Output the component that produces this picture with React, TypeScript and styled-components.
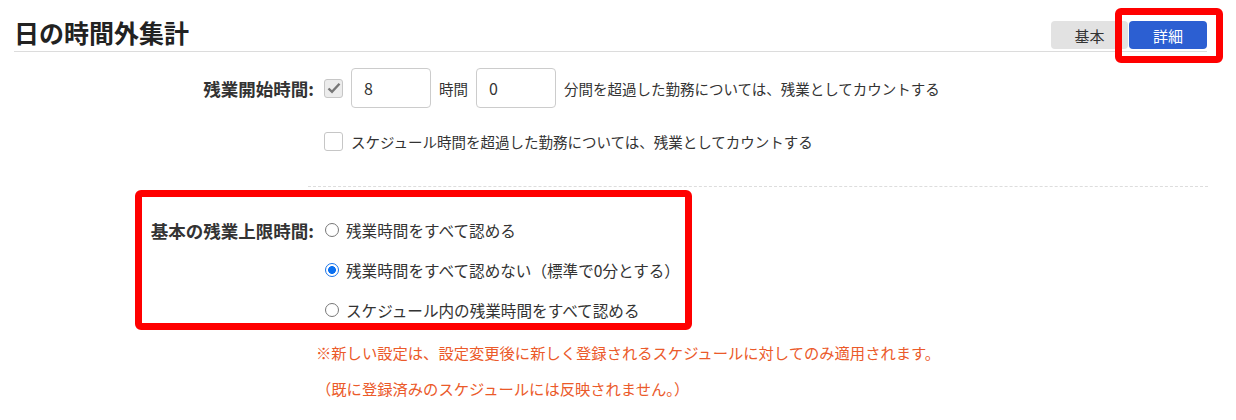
import React from 'react'
import styled, { createGlobalStyle } from 'styled-components'

const GlobalStyle = createGlobalStyle`
  body {
    margin: 0;
    background: #fff;
    color: #333;
    font-family: 'Noto Sans CJK JP', 'Noto Sans', sans-serif;
  }
`

const Page = styled.div`
  width: 1236px;
  height: 420px;
  overflow: hidden;
`

const Header = styled.div`
  display: flex;
  align-items: flex-end;
  margin: 14px 29px 0 14px;
  border-bottom: 1px solid #dcdcdc;
`

const Title = styled.h1`
  flex: 1;
  margin: 0;
  font-size: 25px;
  line-height: 37px;
  font-weight: 700;
  color: #222;
`

const Toggle = styled.div`
  display: flex;
  gap: 1px;
  margin-bottom: 2px;
`

const ToggleButton = styled.button<{ $active?: boolean }>`
  position: relative;
  width: ${p => (p.$active ? 78 : 77)}px;
  height: 28px;
  border: none;
  border-radius: 4px;
  font-family: inherit;
  font-size: 15px;
  background: ${p => (p.$active ? '#2c5fd2' : '#e2e2e2')};
  color: ${p => (p.$active ? '#fff' : '#333')};

  ${p =>
    p.$active &&
    `
    &::after {
      content: '';
      position: absolute;
      left: -14px;
      top: -13px;
      width: 108px;
      height: 55px;
      box-sizing: border-box;
      border: 7px solid #f00;
      border-radius: 6px;
    }
  `}
`

const Form = styled.div`
  padding-left: 14px;
  font-size: 14.5px;
`

const Row = styled.div<{ $top?: number }>`
  display: grid;
  grid-template-columns: 300px 1fr;
  column-gap: 10px;
  align-items: center;
  min-height: 40px;
  margin-top: ${p => p.$top ?? 0}px;
`

const Label = styled.div`
  text-align: right;
  font-weight: 700;
  font-size: 17.5px;
  color: #333;
`

const Field = styled.div`
  display: flex;
  align-items: center;
  gap: 8px;
  white-space: nowrap;
`

const Check = styled.span<{ $checked?: boolean }>`
  display: inline-flex;
  align-items: center;
  justify-content: center;
  width: 19px;
  height: 19px;
  box-sizing: border-box;
  border: 1px solid #c6c6c6;
  border-radius: 3px;
  background: ${p => (p.$checked ? '#ececec' : '#fff')};
`

const NumInput = styled.input`
  width: 80px;
  height: 40px;
  box-sizing: border-box;
  border: 1px solid #ccc;
  border-radius: 4px;
  padding: 0 12px;
  font-family: inherit;
  font-size: 16px;
  color: #333;
`

const Dashed = styled.div`
  margin: 25px 28px 0 308px;
  border-top: 1px dashed #ddd;
`

const RadioGroup = styled.div`
  position: relative;
  margin-top: 23px;

  &::after {
    content: '';
    position: absolute;
    left: 121px;
    top: -20px;
    width: 557px;
    height: 140px;
    box-sizing: border-box;
    border: 7px solid #f00;
    border-radius: 6px;
    pointer-events: none;
  }
`

const RadioOption = styled.label`
  display: flex;
  align-items: center;
  gap: 7px;
  font-size: 15.6px;
  white-space: nowrap;
`

const Radio = styled.span<{ $checked?: boolean }>`
  width: 14px;
  height: 14px;
  box-sizing: border-box;
  border-radius: 50%;
  border: ${p => (p.$checked ? '1px solid #1a73e8' : '1px solid #777')};
  background: ${p =>
    p.$checked ? 'radial-gradient(circle, #0b70f0 0 3.6px, #fff 4.2px)' : '#fff'};
  margin-left: 1px;
`

const Note = styled.div<{ $top?: number }>`
  color: #eb5a2a;
  font-size: 15.3px;
  line-height: 36px;
  margin: ${p => p.$top ?? 0}px 0 0 302px;
`

const CheckMark = () => (
  <svg width="14" height="12" viewBox="0 0 14 12">
    <path d="M1.5 6.5 L5 9.8 L12.5 1.8" fill="none" stroke="#777" strokeWidth="2.4" />
  </svg>
)

export default function App() {
  return (
    <Page>
      <GlobalStyle />
      <Header>
        <Title>日の時間外集計</Title>
        <Toggle>
          <ToggleButton>基本</ToggleButton>
          <ToggleButton $active>詳細</ToggleButton>
        </Toggle>
      </Header>

      <Form>
        <Row $top={16}>
          <Label>残業開始時間:</Label>
          <Field>
            <Check $checked>
              <CheckMark />
            </Check>
            <NumInput defaultValue="8" />
            <span>時間</span>
            <NumInput defaultValue="0" />
            <span>分間を超過した勤務については、残業としてカウントする</span>
          </Field>
        </Row>
        <Row $top={13}>
          <div />
          <Field>
            <Check />
            <span>スケジュール時間を超過した勤務については、残業としてカウントする</span>
          </Field>
        </Row>
      </Form>

      <Dashed />

      <Form>
        <RadioGroup>
          <Row>
            <Label>基本の残業上限時間:</Label>
            <RadioOption>
              <Radio />
              残業時間をすべて認める
            </RadioOption>
          </Row>
          <Row>
            <div />
            <RadioOption>
              <Radio $checked />
              残業時間をすべて認めない（標準で0分とする）
            </RadioOption>
          </Row>
          <Row>
            <div />
            <RadioOption>
              <Radio />
              スケジュール内の残業時間をすべて認める
            </RadioOption>
          </Row>
        </RadioGroup>
        <Note $top={4}>
          ※新しい設定は、設定変更後に新しく登録されるスケジュールに対してのみ適用されます。
        </Note>
        <Note>（既に登録済みのスケジュールには反映されません。）</Note>
      </Form>
    </Page>
  )
}
